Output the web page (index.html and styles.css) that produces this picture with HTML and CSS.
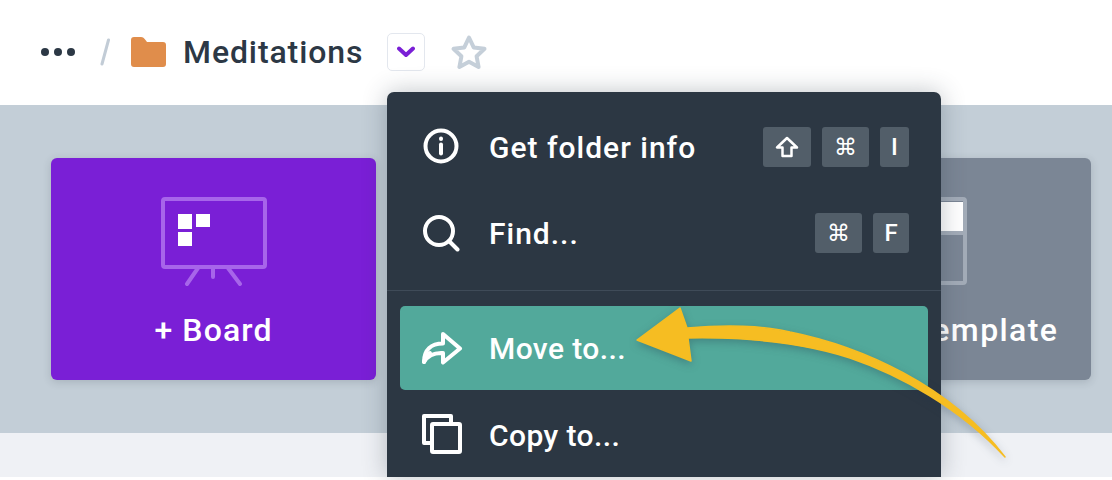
FILE: index.html
```html
<!DOCTYPE html>
<html lang="en">
<head>
  <meta charset="UTF-8" />
  <meta name="viewport" content="width=device-width, initial-scale=1.0"/>
  <title>Meditations</title>
  <link rel="stylesheet" href="styles.css">
</head>
<body>
  <div class="page">
    <header class="topbar">
      <svg class="dots" width="36" height="10" viewBox="0 0 36 10"><circle cx="5" cy="5" r="4"/><circle cx="18" cy="5" r="4"/><circle cx="31" cy="5" r="4"/></svg>
      <svg class="slash" width="10" height="28" viewBox="0 0 10 28"><path d="M8.5 2 2 26"/></svg>
      <svg class="folder" width="35" height="30" viewBox="0 0 35 30"><path d="M0 3a3 3 0 0 1 3-3h7c2 0 3 1 4.500 3l1.500 2h16a3 3 0 0 1 3 3v19a3 3 0 0 1-3 3H3a3 3 0 0 1-3-3z"/></svg>
      <h1 class="title">Meditations</h1>
      <button class="chevron-btn">
        <svg width="18" height="12" viewBox="0 0 18 12"><path d="M2 2.500 9 9l7-6.500"/></svg>
      </button>
      <svg class="star" width="38" height="36" viewBox="0 0 38 36"><path d="M19 3.500 23.700 13.400 34.500 14.800 26.600 22.300 28.600 33 19 27.800 9.400 33 11.400 22.300 3.500 14.800 14.300 13.400z"/></svg>
    </header>

    <section class="band">
      <div class="card card-board">
        <svg class="card-icon" width="108" height="90" viewBox="0 0 108 90">
          <rect class="frame" x="3" y="3" width="102" height="68" rx="2"/>
          <path class="frame" d="M38 72 27 88M53 72v9M68 72l12 16"/>
          <rect class="tile" x="18" y="18" width="14" height="15"/>
          <rect class="tile" x="36" y="18" width="14" height="13"/>
          <rect class="tile" x="18" y="36" width="14" height="14"/>
        </svg>
        <span class="card-label">+ Board</span>
      </div>
      <div class="card card-muted"></div>
      <div class="card card-muted">
        <svg class="card-icon card-icon-shift" width="108" height="90" viewBox="0 0 108 90">
          <rect class="frame-light" x="17" y="3" width="76" height="84" rx="2"/>
          <path class="frame-light" d="M17 37h76"/>
          <rect class="tile" x="50" y="6" width="41" height="29"/>
        </svg>
        <span class="card-label card-label-wide">+ From template</span>
      </div>
    </section>

    <div class="strip"></div>

    <nav class="menu">
      <div class="menu-item">
        <svg class="menu-icon icon-info" width="38" height="38" viewBox="0 0 38 38"><circle cx="19" cy="19" r="15.500"/><path d="M19 17.500v9"/><path d="M19 11.500v.5"/></svg>
        <span class="menu-text">Get folder info</span>
        <span class="keys">
          <span class="key key-shift"><svg width="24" height="22" viewBox="0 0 24 22"><path d="M12 2 2 11.500h5.500V20h9v-8.500H22z"/></svg></span>
          <span class="key key-cmd">⌘</span>
          <span class="key key-i">I</span>
        </span>
      </div>
      <div class="menu-item">
        <svg class="menu-icon" width="38" height="38" viewBox="0 0 38 38"><circle cx="17" cy="17" r="14"/><path d="m27 27 8.500 8.500"/></svg>
        <span class="menu-text">Find...</span>
        <span class="keys">
          <span class="key key-cmd">⌘</span>
          <span class="key key-f">F</span>
        </span>
      </div>
      <div class="menu-divider"></div>
      <div class="menu-item menu-item-active">
        <svg class="menu-icon icon-move" width="42" height="36" viewBox="0 0 42 36"><path d="M3 33C3 21 10 14.500 22 14.500V5l17 14.500-17 14V24C13 23.500 7 26 3 33z"/><path d="M3 33C4 29 6 26 9 24"/></svg>
        <span class="menu-text menu-text-tight">Move to...</span>
      </div>
      <div class="menu-item menu-item-copy">
        <svg class="menu-icon icon-copy" width="42" height="42" viewBox="0 0 42 42"><path d="M10 30H3V3h27v7"/><rect x="11" y="11" width="28" height="28" rx="1"/></svg>
        <span class="menu-text menu-text-tight">Copy to...</span>
      </div>
    </nav>

    <svg class="arrow" width="1112" height="480" viewBox="0 0 1112 480">
      <path d="M637 340 680 308 687 328C720 325 760 325 790 332 860 346 950 385 1005 457 960 408 900 375 850 358 800 342 740 337 688 338L691 361Z"/>
    </svg>
  </div>
</body>
</html>
```

FILE: styles.css
```css
* {
  box-sizing: border-box;
  margin: 0;
  padding: 0;
}

body {
  background: #fff;
  height: 480px;
  overflow: hidden;
  font-family: Roboto, "Noto Sans", sans-serif;
}

.page {
  position: relative;
  width: 1112px;
  height: 480px;
}

/* top bar */
.topbar {
  height: 105px;
  display: flex;
  align-items: center;
  padding: 0 0 2px 40px;
  background: #fff;
}

.dots { fill: #2c3845; }

.slash {
  margin-left: 24px;
  fill: none;
  stroke: #c2ccd6;
  stroke-width: 3;
  stroke-linecap: round;
}

.folder {
  margin-left: 21px;
  fill: #e08d4b;
}

.title {
  margin-left: 17px;
  font-size: 32px;
  font-weight: 500;
  letter-spacing: 0.9px;
  color: #2c3845;
}

.chevron-btn {
  width: 38px;
  height: 38px;
  margin-left: 24px;
  display: flex;
  align-items: center;
  justify-content: center;
  background: #fff;
  border: 1.500px solid #e3e7ee;
  border-radius: 5px;
}

.chevron-btn svg {
  fill: none;
  stroke: #7a1fd6;
  stroke-width: 4;
  stroke-linecap: round;
  stroke-linejoin: round;
}

.star {
  margin-left: 25px;
  fill: none;
  stroke: #c5cfd9;
  stroke-width: 4;
  stroke-linejoin: round;
}

/* template band */
.band {
  height: 328px;
  display: grid;
  grid-template-columns: repeat(3, 325px);
  column-gap: 32.500px;
  padding: 53px 0 0 51px;
  background: #c3ced7;
}

.card {
  height: 222px;
  display: flex;
  flex-direction: column;
  align-items: center;
  padding-top: 38px;
  border-radius: 6px;
  box-shadow: 0 2px 8px rgba(44, 56, 69, 0.18);
}

.card-board { background: #7a1fd6; }
.card-muted { background: #7b8695; }

.card-icon { flex: none; }
.card-icon-shift { margin-left: -6px; }

.frame {
  fill: none;
  stroke: #a765ea;
  stroke-width: 4;
  stroke-linecap: round;
}

.frame-light {
  fill: none;
  stroke: #a3acb8;
  stroke-width: 4;
}

.tile { fill: #fff; }

.card-label {
  margin-top: 25px;
  font-size: 32px;
  font-weight: 500;
  letter-spacing: 1.100px;
  color: #fff;
}

.card-label-wide { letter-spacing: 1.400px; margin-left: 4px; }

.strip {
  height: 44px;
  background: #eff1f5;
}

/* dropdown */
.menu {
  position: absolute;
  left: 387px;
  top: 92px;
  width: 554px;
  height: 385px;
  padding: 13px 13px 0;
  overflow: hidden;
  background: #2c3743;
  border-radius: 7px 7px 0 0;
  box-shadow: 0 0 24px rgba(44, 56, 69, 0.3);
}

.menu-item {
  height: 86px;
  display: flex;
  align-items: center;
  padding: 0 19px 2px 22px;
  border-radius: 5px;
}

.menu-item-active {
  height: 84px;
  padding-bottom: 0;
  background: #52a99b;
}

.menu-icon {
  flex: none;
  fill: none;
  stroke: #fff;
  stroke-width: 4;
  stroke-linecap: round;
  stroke-linejoin: round;
}

.icon-info { margin-top: -2px; }
.icon-move { margin: -3px 0 0 -1px; }
.icon-copy { margin: -2px 0 0 -1px; }

.menu-text {
  position: absolute;
  left: 102px;
  font-size: 30px;
  font-weight: 500;
  letter-spacing: 1px;
  color: #fff;
}

.menu-text-tight { letter-spacing: 0.4px; }

.menu-item .keys {
  margin-left: auto;
  display: flex;
  gap: 11px;
}

.key {
  height: 40px;
  display: flex;
  align-items: center;
  justify-content: center;
  background: #525e69;
  border-radius: 3px;
  font-size: 24px;
  font-weight: 500;
  color: #fff;
}

.key-shift { width: 48px; }
.key-shift svg { fill: none; stroke: #fff; stroke-width: 2.500; stroke-linejoin: round; }
.key-cmd { width: 47px; font-family: "DejaVu Sans", sans-serif; font-size: 23px; font-weight: 400; }
.key-i { width: 29px; }
.key-f { width: 36px; }

.menu-divider {
  height: 1px;
  margin: 13px -13px 15px;
  background: #3f4b58;
}

.menu-item-copy {
  padding-top: 4px;
  padding-bottom: 0;
}

/* annotation arrow */
.arrow {
  position: absolute;
  left: 0;
  top: 0;
  fill: #f6bd22;
  stroke: #f6bd22;
  stroke-width: 1.500;
  stroke-linejoin: round;
  filter: drop-shadow(0 3px 4px rgba(30, 50, 70, 0.3));
  pointer-events: none;
}
```
